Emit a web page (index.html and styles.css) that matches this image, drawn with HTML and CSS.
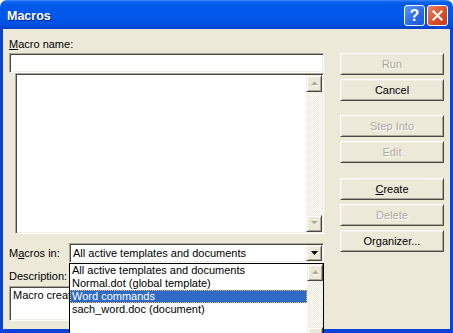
FILE: index.html
```html
<!DOCTYPE html>
<html lang="en">
<head>
    <meta charset="UTF-8">
    <title>Macros</title>
    <link rel="stylesheet" href="styles.css">
</head>
<body>

<div class="window">
    <div class="titlebar">
        <span class="title">Macros</span>
        <div class="caption-btns">
            <span class="cap-btn help">?</span>
            <span class="cap-btn close">
                <svg width="11" height="11" viewBox="0 0 11 11"><path d="M1.5 1.5 L9.5 9.5 M9.5 1.5 L1.5 9.5" stroke="#fff" stroke-width="2.2" stroke-linecap="square"/></svg>
            </span>
        </div>
    </div>

    <div class="client">
        <!-- left side: name, list, location, description -->
        <div class="left-col">
            <div class="lbl"><u>M</u>acro name:</div>
            <div class="textbox sunken"></div>
            <div class="listbox sunken">
                <div class="vscroll">
                    <span class="sb-btn"><svg width="7" height="5" viewBox="0 0 7 5"><path d="M1 5 L4 2 L7 5 Z" fill="#fff"/><path d="M0 4 L3.5 0.5 L7 4 Z" fill="#ACA899"/></svg></span>
                    <span class="sb-track"></span>
                    <span class="sb-btn"><svg width="7" height="5" viewBox="0 0 7 5"><path d="M1 1 L4 4.5 L7 1 Z" fill="#fff"/><path d="M0 0 L3.5 3.5 L7 0 Z" fill="#ACA899"/></svg></span>
                </div>
            </div>

            <div class="macros-in">
                <div class="lbl">M<u>a</u>cros in:</div>
                <div class="combo-wrap">
                    <div class="combo sunken">
                        <span class="combo-text">All active templates and documents</span>
                        <span class="sb-btn combo-btn"><svg width="7" height="4" viewBox="0 0 7 4"><path d="M0 0 L7 0 L3.5 4 Z" fill="#000"/></svg></span>
                    </div>
                    <div class="dropdown">
                        <ul>
                            <li>All active templates and documents</li>
                            <li>Normal.dot (global template)</li>
                            <li class="selected">Word commands</li>
                            <li>sach_word.doc (document)</li>
                        </ul>
                        <div class="vscroll">
                            <span class="sb-btn"><svg width="7" height="5" viewBox="0 0 7 5"><path d="M1 5 L4 2 L7 5 Z" fill="#fff"/><path d="M0 4 L3.5 0.5 L7 4 Z" fill="#ACA899"/></svg></span>
                            <span class="sb-track"></span>
                            <span class="sb-btn"><svg width="7" height="5" viewBox="0 0 7 5"><path d="M0 0 L3.5 3.5 L7 0 Z" fill="#000"/></svg></span>
                        </div>
                    </div>
                </div>
            </div>

            <div class="lbl desc-lbl">Description:</div>
            <div class="desc sunken">Macro created 3/14/2005 by sach</div>
        </div>

        <!-- right side: command buttons -->
        <div class="right-col">
            <span class="btn disabled">Run</span>
            <span class="btn">Cancel</span>
            <span class="btn disabled group-a">Step Into</span>
            <span class="btn disabled">Edit</span>
            <span class="btn group-b"><u>C</u>reate</span>
            <span class="btn disabled">Delete</span>
            <span class="btn">Or<u>g</u>anizer...</span>
        </div>
    </div>
</div>

</body>
</html>
```

FILE: styles.css
```css
body {
    margin: 0;
    background-color: #fff;
    overflow: hidden;
    font-family: "Liberation Sans", Arial, sans-serif;
    font-size: 11px;
    color: #000;
}

.window {
    width: 453px;
    height: 333px;
    display: flex;
    flex-direction: column;
}

.titlebar {
    height: 29px;
    flex: none;
    box-sizing: border-box;
    display: flex;
    align-items: center;
    justify-content: space-between;
    padding: 0 5px 0 7px;
    border-radius: 7px 7px 0 0;
    background: linear-gradient(#3A8CF7 0px, #0A61EC 2px, #0157E8 6px, #0058EB 16px, #0052E2 24px, #0040C8 29px);
}

.title {
    color: #fff;
    font-weight: bold;
    font-size: 12.5px;
    padding-top: 3px;
    text-shadow: 1px 1px #0A1D8A;
}

.caption-btns {
    display: flex;
    gap: 2px;
    margin-top: 2px;
}

.cap-btn {
    width: 21px;
    height: 21px;
    box-sizing: border-box;
    border: 1px solid #fff;
    border-radius: 3px;
    display: flex;
    align-items: center;
    justify-content: center;
}

.help {
    background: linear-gradient(135deg, #5C96FA, #2A66E8 60%, #1C55D8);
    color: #fff;
    font-weight: bold;
    font-size: 16px;
    line-height: 19px;
}

.close {
    background: linear-gradient(135deg, #EA8466, #DC4E26 55%, #C63C18);
}

.client {
    flex: 1;
    display: flex;
    gap: 16px;
    background-color: #ECE9D8;
    border-style: solid;
    border-color: #0843D8;
    border-width: 0 3px 4px 3px;
    padding: 9px 6px 0 6px;
}

.sunken {
    box-sizing: border-box;
    border: 1px solid;
    border-color: #ACA899 #fff #fff #ACA899;
    box-shadow: inset 1px 1px #4A4840, inset -1px -1px #F1EFE2;
    background-color: #fff;
}

.left-col {
    width: 315px;
    display: flex;
    flex-direction: column;
}

.lbl {
    height: 13px;
    line-height: 13px;
    white-space: nowrap;
}

.textbox {
    height: 20px;
    margin-top: 2px;
}

.listbox {
    height: 161px;
    margin-left: 6px;
    padding: 1px;
    display: flex;
    justify-content: flex-end;
}

.vscroll {
    width: 16px;
    display: flex;
    flex-direction: column;
}

.sb-btn {
    height: 17px;
    flex: none;
    box-sizing: border-box;
    display: flex;
    align-items: center;
    justify-content: center;
    background-color: #ECE9D8;
    border: 1px solid;
    border-color: #F1EFE2 #4A4840 #4A4840 #F1EFE2;
    box-shadow: inset 1px 1px #fff, inset -1px -1px #ACA899;
}

.sb-track {
    flex: 1;
    background: repeating-conic-gradient(#ECE9D8 0 25%, #fff 0 50%) 0 0 / 2px 2px;
}

.macros-in {
    margin-top: 9px;
    height: 20px;
    display: flex;
    align-items: center;
    justify-content: space-between;
}

.combo-wrap {
    position: relative;
    width: 255px;
}

.combo {
    height: 20px;
    padding: 1px;
    display: flex;
    align-items: center;
}

.combo-text {
    flex: 1;
    padding-left: 2px;
    line-height: 13px;
    white-space: nowrap;
}

.combo-btn {
    width: 16px;
    height: 16px;
}

.dropdown {
    position: absolute;
    top: 100%;
    left: 0;
    z-index: 2;
    width: 255px;
    height: 82px;
    box-sizing: border-box;
    border: 1px solid #000;
    background-color: #fff;
    display: flex;
}

.dropdown ul {
    flex: 1;
    margin: 0;
    padding: 0;
    list-style: none;
}

.dropdown li {
    height: 13px;
    line-height: 13px;
    padding-left: 2px;
    white-space: nowrap;
}

.dropdown li.selected {
    background-color: #316AC5;
    color: #fff;
    outline: 1px dotted #E8C064;
    outline-offset: -1px;
}

.desc-lbl {
    margin-top: 7px;
}

.desc {
    height: 35px;
    margin-top: 3px;
    padding: 2px 3px;
    line-height: 13px;
    white-space: nowrap;
    overflow: hidden;
}

.right-col {
    width: 104px;
    margin-top: 15px;
    display: flex;
    flex-direction: column;
    gap: 4px;
}

.btn {
    height: 22px;
    box-sizing: border-box;
    display: flex;
    align-items: center;
    justify-content: center;
    background-color: #ECE9D8;
    border: 1px solid;
    border-color: #fff #4A4840 #4A4840 #fff;
    box-shadow: inset 1px 1px #F1EFE2, inset -1px -1px #ACA899;
}

.btn.disabled {
    color: #ACA899;
    text-shadow: 1px 1px #fff;
}

.group-a {
    margin-top: 10px;
}

.group-b {
    margin-top: 11px;
}
```
